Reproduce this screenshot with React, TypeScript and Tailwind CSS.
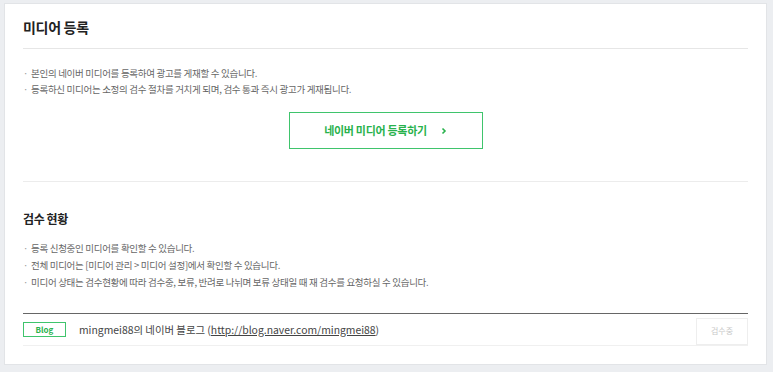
const font = "font-['Nanum_Gothic','Noto_Sans_CJK_KR',sans-serif]";

function Bullet({ children }: { children: React.ReactNode }) {
	return (
		<li className="flex items-start">
			<span className="w-[8px] shrink-0 text-[#999]">·</span>
			<span>{children}</span>
		</li>
	);
}

export default function App() {
	return (
		<div className={`${font} w-[773px] h-[372px] bg-[#eceef1] pt-[3px] pl-[4px]`}>
			<div className="w-[763px] h-[362px] bg-white border border-[#e2e4e7] px-[18px] pt-[13px]">
				<h2 className="text-[14px] leading-[20px] font-bold text-[#222] tracking-[-0.3px]">
					미디어 등록
				</h2>
				<div className="mt-[11px] h-px bg-[#e6e6e6]" />

				<ul className="mt-[16px] text-[9.5px] leading-[16px] text-[#666] tracking-[-0.3px]">
					<Bullet>본인의 네이버 미디어를 등록하여 광고를 게재할 수 있습니다.</Bullet>
					<Bullet>
						등록하신 미디어는 소정의 검수 절차를 거치게 되며, 검수 통과 즉시 광고가 게재됩니다.
					</Bullet>
				</ul>

				<div className="mt-[15px] flex justify-center">
					<button
						type="button"
						className="w-[194px] h-[37px] border border-[#3fc46c] text-[#28b24c] text-[11px] font-bold tracking-[-0.3px] flex items-center justify-center gap-[14px]"
					>
						<span>네이버 미디어 등록하기</span>
						<svg width="6" height="8" viewBox="0 0 6 8" className="mt-px">
							<path d="M1.5 1.5 L4 4 L1.5 6.5" fill="none" stroke="#28b24c" strokeWidth="1.6" />
						</svg>
					</button>
				</div>

				<div className="mt-[32px] h-px bg-[#ececec]" />

				<h3 className="mt-[29px] text-[12px] leading-[16px] font-bold text-[#222] tracking-[-0.4px]">
					검수 현황
				</h3>

				<ul className="mt-[13px] text-[9.5px] leading-[17px] text-[#666] tracking-[-0.3px]">
					<Bullet>등록 신청중인 미디어를 확인할 수 있습니다.</Bullet>
					<Bullet>전체 미디어는 [미디어 관리 &gt; 미디어 설정]에서 확인할 수 있습니다.</Bullet>
					<Bullet>
						미디어 상태는 검수현황에 따라 검수중, 보류, 반려로 나뉘며 보류 상태일 때 재 검수를 요청하실 수 있습니다.
					</Bullet>
				</ul>

				<div className="mt-[22px] border-t border-[#666]">
					<div className="h-[32px] flex items-center border-b border-[#f0f0f0]">
						<span className="w-[43px] h-[15px] border border-[#3fc46c] text-[#28b24c] text-[8px] font-bold flex items-center justify-center">
							Blog
						</span>
						<span className="ml-[13px] text-[10.4px] text-[#444]">
							mingmei88의 네이버 블로그 (
							<a className="underline" href="#">
								http://blog.naver.com/mingmei88
							</a>
							)
						</span>
						<button
							type="button"
							className="ml-auto mt-[3px] w-[52px] h-[27px] border border-[#eeeeee] text-[8px] text-[#c8c8c8]"
						>
							검수중
						</button>
					</div>
				</div>
			</div>
		</div>
	);
}
